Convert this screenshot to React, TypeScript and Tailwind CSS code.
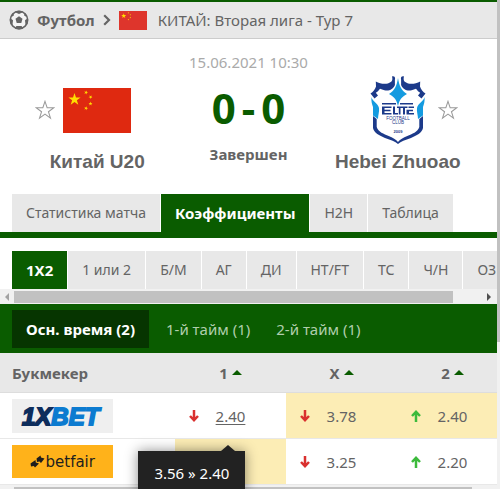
import type { ReactNode } from "react";

const STAR = "M0,-10 L2.3,-3.1 9.5,-3.1 3.7,1.2 5.9,8.1 0,3.8 -5.9,8.1 -3.7,1.2 -9.5,-3.1 -2.3,-3.1Z";

function Flag({ className, fill }: { className: string; fill: string }) {
  return (
    <svg className={className} viewBox="0 0 68 45" preserveAspectRatio="none" role="img" aria-label="Китай">
      <rect width="68" height="45" fill={fill} />
      <g fill="#ffde00">
        <path d={STAR} transform="translate(11.5 11.5) scale(.64)" />
        <path d={STAR} transform="translate(23 4.5) rotate(20) scale(.21)" />
        <path d={STAR} transform="translate(27.5 9) rotate(45) scale(.21)" />
        <path d={STAR} transform="translate(27.5 15.7) scale(.21)" />
        <path d={STAR} transform="translate(23 20.3) rotate(20) scale(.21)" />
      </g>
    </svg>
  );
}

function Football() {
  return (
    <svg className="h-5 w-5 shrink-0" viewBox="0 0 20 20" aria-hidden="true">
      <circle cx="10" cy="10" r="8.7" fill="#f4f4f4" stroke="#646464" strokeWidth="1.5" />
      <g fill="#646464">
        <path d="M10 6.3 13.5 8.8 12.3 13H7.7L6.5 8.8Z" />
        <path d="M5.500 2 10 4 14.500 2 12.8 1 10 .7 7.2 1Z" />
        <path d="M1 8 4 10.3 3.4 15.2 1.6 13.6 .9 10Z" />
        <path d="M19 8 16 10.3 16.6 15.2 18.4 13.6 19.1 10Z" />
        <path d="M6 18.700 7.4 15.9H12.6L14 18.700 10 19.6Z" />
        <path d="M2 5.5 4.2 3 5 5.3 3.5 6.5Z M18 5.5 15.8 3 15 5.3 16.5 6.5Z" />
      </g>
    </svg>
  );
}

function FavouriteButton({ team }: { team: string }) {
  return (
    <button type="button" aria-label={`В избранное: ${team}`} className="h-5 w-5 shrink-0">
      <svg viewBox="-10 -10 20 20" className="h-5 w-5">
        <path d={STAR} transform="translate(0 .6) scale(.93)" fill="#fff" stroke="#999" strokeWidth="1.1" />
      </svg>
    </button>
  );
}

function Crest() {
  return (
    <svg className="h-[68px] w-14" viewBox="0 0 56 68" role="img" aria-label="Hebei Zhuoao">
      <g fill="#1c3a8a">
        <path d="M22 .5c2-.8 3.600 .5 2.900 3V9c-1.500 4-6 6.500-10.500 5.200L10 12.800c-1.500 2-2.500 3.300-4.200 3.900L8 19.500 4.500 22.500.5 17.500c2.500-1.500 4.700-4.300 5.500-7L5.800 5.500c4.700 2.500 11 3.500 15 .5 1.600-1.200 1.900-3.300 1.200-5.500Z" />
        <path d="M34 .5c-2-.8-3.600 .5-2.900 3V9c1.500 4 6 6.500 10.500 5.200L46 12.800c1.500 2 2.500 3.300 4.200 3.900L48 19.500 51.500 22.500 55.500 17.500c-2.500-1.500-4.700-4.300-5.500-7L50.200 5.500c-4.700 2.500-11 3.500-15 .5-1.600-1.200-1.900-3.300-1.200-5.500Z" />
        <path d="M3 40 6.700 43V51c1.500 5 7.300 7 12 9 4 1.600 7.500 3.500 9.300 6C29.800 63.500 33.300 61.600 37.300 60c4.700-2 10.500-4 12-9V43L53 40V52c-1 5-6.500 7.500-12 10-6 2-10 3.500-13 6-3-2.500-7-4-13-6C9.500 59.500 4 57 3 52Z" />
        <path d="M12 27H26V28.500H12Z M30 27H43V28.500H30Z" />
        <path d="M12 30.500H21.500V32H14.500V33.800H20.500V35.300H14.500V37H21.500V38.500H12Z M23 30.500H25V37H28V38.500H23Z M27 30.500H37.500V32H35V38.500H33V32H30.500V38.500H28.800V32H27Z M36.500 33.800H43V35.300H39V37H44V38.500H36.500Z M38.500 30.500H44V32H38.500Z" />
      </g>
      <g fill="#149be0">
        <path d="M28 2C29.300 10 31 14 37 18 31 21.500 29.500 24 28 30 26.500 24 25 21.500 19 18 25 14 26.700 10 28 2Z" />
        <path d="M1.500 21C2 25 8 27 9 32 9.500 36 8 39 8 43L3 39.500V31C2 28 1 25 1.500 21Z" />
        <path d="M54.500 21C54 25 48 27 47 32 46.500 36 48 39 48 43L53 39.500V31C54 28 55 25 54.500 21Z" />
      </g>
      <g fill="#1c3a8a" textAnchor="middle" fontFamily="Liberation Sans, sans-serif">
        <text x="28" y="43.500" fontSize="4.500">FOOTBALL</text>
        <text x="28" y="48" fontSize="4.500">CLUB</text>
        <text x="28" y="57" fontSize="4" fontWeight="700">2009</text>
      </g>
    </svg>
  );
}

function Tabs({ items, active, label }: { items: string[]; active: string; label: string }) {
  return (
    <div role="tablist" aria-label={label} className="flex gap-px pl-3">
      {items.map((t) => (
        <button
          key={t}
          type="button"
          role="tab"
          aria-selected={t === active}
          className={`h-[38px] shrink-0 px-3.5 whitespace-nowrap ${
            t === active ? "bg-[#0a5c00] text-[15px] font-bold text-white" : "bg-[#e8e8e8] text-[14px]"
          }`}
        >
          {t}
        </button>
      ))}
    </div>
  );
}

function Arrow({ up }: { up?: boolean }) {
  return (
    <svg className="h-3 w-2.5 justify-self-end" viewBox="0 0 10 12" aria-label={up ? "рост" : "падение"}>
      <path
        d={up ? "M5 12V2M1 6 5 1.800 9 6" : "M5 0V10M1 6 5 10.200 9 6"}
        fill="none"
        stroke={up ? "#3cba3c" : "#d9302f"}
        strokeWidth="2.500"
      />
    </svg>
  );
}

function Odd({ value, up, best, children }: { value: string; up?: boolean; best?: boolean; children?: ReactNode }) {
  return (
    <td className={`h-[46px] border-b border-[#e8e8e8] p-0 ${best ? "bg-[#fcedb5]" : ""}`}>
      <div className="grid grid-cols-[24px_1fr_24px] items-center text-center">
        <Arrow up={up} />
        {children ?? <span>{value}</span>}
      </div>
    </td>
  );
}

function OneXBet() {
  return (
    <svg className="h-[34px] w-[101px] bg-[#efefef]" viewBox="0 0 101 34" role="img" aria-label="1XBET">
      <text x="10" y="25.500" fontSize="24" fontWeight="700" fontStyle="italic" fontFamily="Liberation Sans, sans-serif" strokeWidth="1.800">
        <tspan fill="#0d2d5c" stroke="#0d2d5c">1X</tspan>
        <tspan fill="#0c7bd0" stroke="#0c7bd0">BET</tspan>
      </text>
    </svg>
  );
}

function Betfair() {
  return (
    <svg className="h-[33px] w-[101px] bg-[#ffb21a]" viewBox="0 0 101 33" role="img" aria-label="betfair">
      <g fill="#1e1e1e">
        <path d="M18.500 18.500 23.500 15 23.800 17.500 27 18.500 23 22.500 21.800 21 19 21.500Z" />
        <path d="M24.500 13.500 28.500 10.500 29 12.500 32.500 13.500 29 18 27.500 16.500 25 17Z" />
        <text x="33.500" y="22" fontSize="15" fontFamily="DejaVu Sans, sans-serif">betfair</text>
      </g>
    </svg>
  );
}

function ScrollTrack({ thumb }: { thumb: string }) {
  return (
    <div className="flex h-[15px] items-center bg-[#f1f1f1]" aria-hidden="true">
      <span className="flex w-3.5 justify-center">
        <svg className="h-2 w-1" viewBox="0 0 4 8"><path d="M4 0V8L0 4Z" fill="#a3a3a3" /></svg>
      </span>
      <div className="flex-1">
        <div className={`h-3 bg-[#c1c1c1] ${thumb}`} />
      </div>
      <span className="flex w-4 justify-center">
        <svg className="h-2 w-1" viewBox="0 0 4 8"><path d="M0 0V8L4 4Z" fill="#505050" /></svg>
      </span>
    </div>
  );
}

export default function App() {
  return (
    <div className="flex h-screen overflow-hidden bg-white font-['Noto_Sans',sans-serif] text-[15px] leading-5 text-[#646464]">
      <main className="min-w-0 flex-1 overflow-hidden">
        <nav className="flex h-[39px] items-center border-t-2 border-b border-t-[#0a5c00] border-b-[#ccc] bg-[#e8e8e8] pl-[9px]">
          <Football />
          <a href="#football" className="ml-2 font-bold">Футбол</a>
          <svg className="mx-2 h-3 w-2" viewBox="0 0 8 12" aria-hidden="true">
            <path d="M1.200 1.200 6 6 1.200 10.800" fill="none" stroke="#646464" strokeWidth="2.200" />
          </svg>
          <Flag className="h-[19px] w-7" fill="#de352c" />
          <a href="#league" className="ml-[11px]">КИТАЙ: Вторая лига - Тур 7</a>
        </nav>

        <section className="grid grid-cols-[1fr_140px_1fr] pt-[13px]">
          <div className="flex flex-col items-center pt-6">
            <div className="flex h-[68px] items-center gap-2 pr-3">
              <FavouriteButton team="Китай U20" />
              <Flag className="h-[45px] w-[68px]" fill="#df2910" />
            </div>
            <h2 className="mt-2 pl-4 font-['Liberation_Sans',sans-serif] text-[19px] font-bold">Китай U20</h2>
          </div>
          <div className="flex flex-col items-center whitespace-nowrap">
            <time className="text-[#aaa]">15.06.2021 10:30</time>
            <div className="mt-3 flex h-12 items-center gap-1.5 text-[42px] font-bold text-[#0a5c00]">
              <span>0</span><span>-</span><span>0</span>
            </div>
            <p className="mt-3 font-bold">Завершен</p>
          </div>
          <div className="flex flex-col items-center pt-6">
            <div className="flex h-[68px] items-center gap-3 pl-3">
              <Crest />
              <FavouriteButton team="Hebei Zhuoao" />
            </div>
            <h2 className="mt-2 pr-5 font-['Liberation_Sans',sans-serif] text-[19px] font-bold">Hebei Zhuoao</h2>
          </div>
        </section>

        <div className="mt-[22px] border-b-[6px] border-[#0a5c00]">
          <Tabs label="Матч" active="Коэффициенты" items={["Статистика матча", "Коэффициенты", "H2H", "Таблица"]} />
        </div>
        <div className="mt-[13px] overflow-hidden">
          <Tabs label="Рынки" active="1X2" items={["1X2", "1 или 2", "Б/М", "АГ", "ДИ", "HT/FT", "ТС", "Ч/Н", "ОЗ"]} />
          <ScrollTrack thumb="w-[94%]" />
        </div>

        <div role="tablist" aria-label="Период" className="flex h-[49px] items-center bg-[#0a5c00] pl-3 text-[#b0ceac]">
          <button type="button" role="tab" aria-selected="true" className="mr-1 h-[38px] bg-[#063500] px-3.5 font-bold text-white">Осн. время (2)</button>
          <button type="button" role="tab" aria-selected="false" className="h-[38px] px-[13px]">1-й тайм (1)</button>
          <button type="button" role="tab" aria-selected="false" className="h-[38px] px-[13px]">2-й тайм (1)</button>
        </div>

        <table className="w-full min-w-[508px] table-fixed border-separate border-spacing-0">
          <thead>
            <tr className="bg-[#e8e8e8]">
              <th scope="col" className="h-10 border-b border-[#ddd] py-0 pl-3 text-left">Букмекер</th>
              {["1", "X", "2"].map((h) => (
                <th key={h} scope="col" className="w-[111px] border-b border-[#ddd] p-0">
                  <button type="button" className="inline-flex items-center gap-1 font-bold">
                    {h}
                    <svg className="h-[5px] w-2.5" viewBox="0 0 10 5" aria-hidden="true"><path d="M0 5 5 0 10 5Z" fill="#0a5c00" /></svg>
                  </button>
                </th>
              ))}
            </tr>
          </thead>
          <tbody>
            <tr>
              <td className="border-b border-[#e8e8e8] py-0 pl-3"><OneXBet /></td>
              <Odd value="2.40">
                <span className="relative justify-self-center">
                  <a href="#odds" className="underline underline-offset-2">2.40</a>
                  <span role="tooltip" className="absolute top-[45px] right-0 bg-[#222] px-4 py-3 whitespace-nowrap text-white shadow-[0_0_12px_rgba(0,0,0,0.45)]">
                    <svg className="absolute -top-1.5 right-2.5 h-1.5 w-3.5" viewBox="0 0 14 6" aria-hidden="true"><path d="M0 6 7 0 14 6Z" fill="#222" /></svg>
                    3.56 » 2.40
                  </span>
                </span>
              </Odd>
              <Odd value="3.78" best />
              <Odd value="2.40" up best />
            </tr>
            <tr>
              <td className="border-b border-[#e8e8e8] py-0 pl-3"><Betfair /></td>
              <Odd value="" best><span /></Odd>
              <Odd value="3.25" />
              <Odd value="2.20" up />
            </tr>
          </tbody>
        </table>
        <ScrollTrack thumb="w-[98%]" />
      </main>
      <div className="w-[3px] shrink-0 bg-[#f1f1f1]" aria-hidden="true">
        <div className="h-[70%] bg-[#c1c1c1]" />
      </div>
    </div>
  );
}
